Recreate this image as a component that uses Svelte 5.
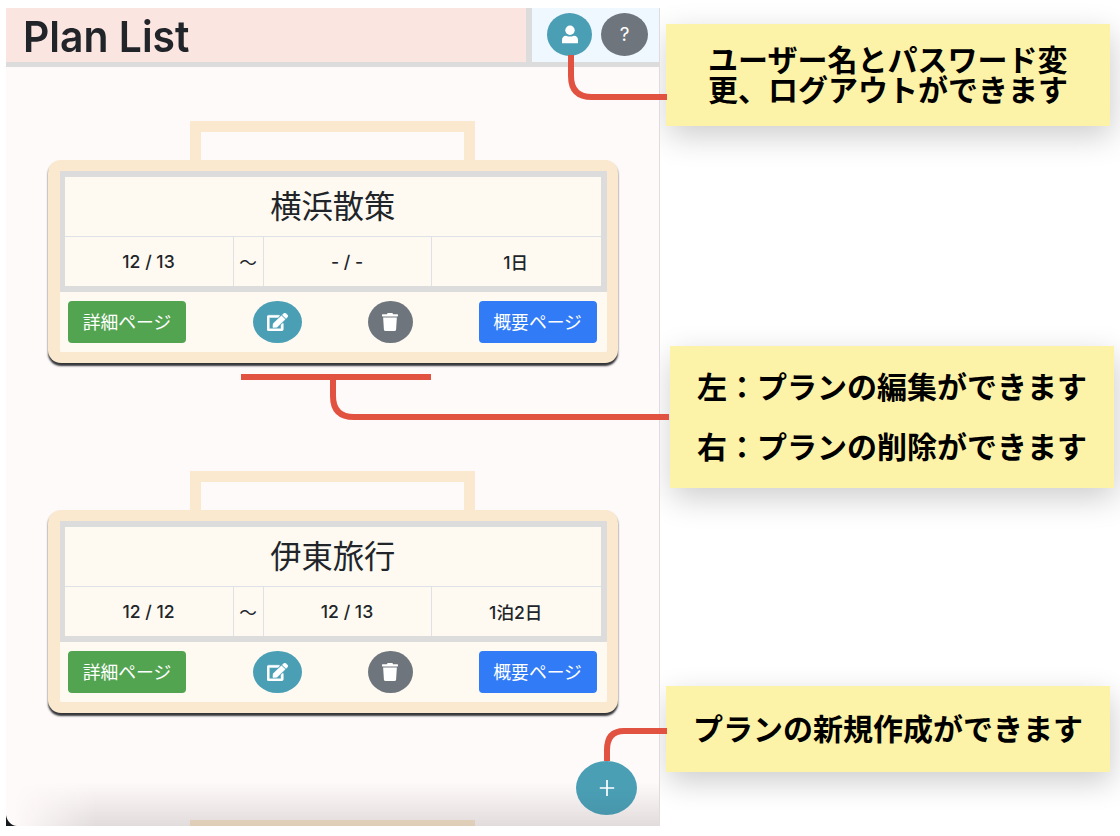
<script>
  const plans = [
    { title: '横浜散策', from: '12 / 13', to: '- / -', days: '1日' },
    { title: '伊東旅行', from: '12 / 12', to: '12 / 13', days: '1泊2日' }
  ];
</script>

<div class="page">
  <main class="screen">
    <header>
      <h1><span>Plan List</span></h1>
      <nav>
        <button class="oval user" aria-label="User">
          <svg width="18" height="19" viewBox="0 0 18 19" fill="#fff">
            <circle cx="9" cy="5.2" r="4.7" />
            <path d="M1 17.9V15.2Q1 10.7 5.2 10.7Q9 12.4 12.8 10.7Q17 10.7 17 15.2V17.9Q17 18.2 16.4 18.2H1.6Q1 18.2 1 17.9Z" />
          </svg>
        </button>
        <button class="oval help">?</button>
      </nav>
    </header>

    {#each plans as plan}
      <section class="plan">
        <div class="handle"></div>
        <div class="card">
          <div class="table">
            <h2>{plan.title}</h2>
            <div class="row">
              <span>{plan.from}</span>
              <span>～</span>
              <span>{plan.to}</span>
              <span>{plan.days}</span>
            </div>
          </div>
          <div class="actions">
            <button class="btn detail">詳細ページ</button>
            <button class="oval edit" aria-label="Edit">
              <svg width="21" height="18" viewBox="0 0 576 512" preserveAspectRatio="none" fill="#fff" stroke="#fff" stroke-width="12">
                <path d="M402.6 83.200l90.200 90.200c3.800 3.800 3.800 10 0 13.800L274.400 405.600l-92.800 10.300c-12.400 1.400-22.900-9.100-21.500-21.500l10.300-92.800L388.800 83.200c3.800-3.800 10-3.800 13.800 0zm162-22.900l-48.800-48.800c-15.200-15.200-39.900-15.200-55.200 0l-35.400 35.400c-3.800 3.800-3.800 10 0 13.800l90.200 90.200c3.800 3.800 10 3.800 13.800 0l35.400-35.400c15.200-15.300 15.200-40 0-55.200zM384 346.200V448H64V128h229.800c3.200 0 6.200-1.300 8.500-3.500l40-40c7.600-7.600 2.200-20.500-8.500-20.500H48C21.500 64 0 85.500 0 112v352c0 26.500 21.500 48 48 48h352c26.500 0 48-21.500 48-48V306.200c0-10.700-12.900-16-20.500-8.500l-40 40c-2.200 2.300-3.500 5.300-3.500 8.500z" />
              </svg>
            </button>
            <button class="oval trash" aria-label="Delete">
              <svg width="16" height="18" viewBox="0 0 448 512" preserveAspectRatio="none" fill="#fff">
                <path d="M432 32H312l-9.400-18.700A24 24 0 0 0 281.100 0H166.800a23.720 23.720 0 0 0-21.400 13.300L136 32H16A16 16 0 0 0 0 48v32a16 16 0 0 0 16 16h416a16 16 0 0 0 16-16V48a16 16 0 0 0-16-16zM53.200 467a48 48 0 0 0 47.900 45h245.800a48 48 0 0 0 47.900-45L416 128H32z" />
              </svg>
            </button>
            <button class="btn summary">概要ページ</button>
          </div>
        </div>
      </section>
    {/each}
    <div class="handle next"></div>
    <div class="fade"></div>
    <button class="oval add" aria-label="Add">
      <svg width="16" height="18" viewBox="0 0 16 18" stroke="#fff" stroke-width="1.7">
        <path d="M8 1V17M.8 9H15.200" />
      </svg>
    </button>
    <svg class="corner" width="12" height="12"><path d="M0 1C1 7 5 11.500 11 12H0Z" fill="#16191b" /></svg>
  </main>

  <aside>
    <div class="note account">ユーザー名とパスワード変<br />更、ログアウトができます</div>
    <div class="note manage">左：プランの編集ができます<br />右：プランの削除ができます</div>
    <div class="note create">プランの新規作成ができます</div>
  </aside>

  <svg class="lines" width="1120" height="836" fill="none" stroke="#e25241" stroke-width="6">
    <path d="M571 55V76Q571 97 592 97H667" />
    <path d="M241 377H431M333 377V396Q333 417 354 417H669" />
    <path d="M607 761V750Q607 731 624 731H667" />
  </svg>
</div>

<style>
  :global(body) {
    margin: 0;
    background: #fff;
  }
  .page {
    position: relative;
    box-sizing: border-box;
    display: flex;
    width: 1120px;
    height: 836px;
    padding-top: 8px;
    padding-left: 6px;
    overflow: hidden;
    font-family: Inter, 'Noto Sans CJK JP', sans-serif;
    color: #212529;
  }
  .screen {
    position: relative;
    box-sizing: border-box;
    width: 654px;
    height: 818px;
    overflow: hidden;
    background: #fffafa;
    border-right: 1px solid #dedcdd;
  }
  header {
    display: flex;
    box-sizing: border-box;
    height: 59px;
    border-bottom: 5.500px solid #dcdcdc;
  }
  h1 {
    box-sizing: border-box;
    width: 526px;
    margin: 0;
    padding-left: 17px;
    background: #fbe5e1;
    border-right: 6px solid #dcdcdc;
    font-size: 43px;
    font-weight: 600;
    line-height: 56px;
  }
  h1 span {
    display: inline-block;
    transform: scaleX(0.95);
    transform-origin: left;
  }
  nav {
    display: flex;
    flex: 1;
    gap: 9px;
    padding: 5px 0 0 15px;
    background: #f0f8ff;
  }
  button {
    display: flex;
    align-items: center;
    justify-content: center;
    padding: 0;
    border: 0;
    color: #fff;
    font-family: inherit;
  }
  .oval {
    width: 45px;
    height: 43px;
    border-radius: 50%;
    background: #4a9fb5;
  }
  .oval.help {
    width: 47px;
    background: #6e757c;
    font-size: 19px;
  }
  .plan {
    height: 350px;
    box-sizing: border-box;
    padding-top: 54px;
  }
  .handle {
    box-sizing: border-box;
    width: 285px;
    height: 39px;
    margin-left: 184px;
    border: 11px solid #fbe9cf;
    border-bottom: 0;
  }
  .handle.next {
    margin-top: 53px;
  }
  .card {
    box-sizing: border-box;
    width: 570px;
    height: 203px;
    margin-left: 42px;
    padding: 11px 11.500px 11px 12px;
    border-radius: 13px;
    background: linear-gradient(#fefaf2, #fefaf2) content-box, #fbe9cf;
    box-shadow: 0 2.500px 2px #333539;
  }
  .table {
    box-sizing: border-box;
    height: 121px;
    border: 6px solid #dcdcdc;
    border-left-width: 5px;
  }
  h2 {
    box-sizing: border-box;
    height: 60px;
    margin: 0;
    border-bottom: 1px solid #dee2e6;
    text-align: center;
    font-size: 31.300px;
    font-weight: 400;
    line-height: 60px;
  }
  .row {
    display: grid;
    grid-template-columns: 169px 30px 168px 1fr;
    height: 49px;
  }
  .row span {
    display: flex;
    align-items: center;
    justify-content: center;
    padding-right: 1px;
    padding-bottom: 1px;
    border-right: 1px solid #dee2e6;
    font-size: 17.600px;
    font-weight: 450;
    white-space: pre;
  }
  .row span:nth-child(2) {
    font-weight: 400;
  }
  .row span:last-child {
    border-right: 0;
  }
  .actions {
    display: flex;
    align-items: center;
    padding: 8.500px 10px 0 8px;
  }
  .btn {
    box-sizing: border-box;
    width: 118px;
    height: 42.500px;
    padding-bottom: 2px;
    border-radius: 4px;
    font-size: 17.800px;
  }
  .actions .oval {
    height: 42.500px;
  }
  .detail {
    background: #53a451;
  }
  .summary {
    margin-left: 66px;
    background: #327bf6;
  }
  .edit {
    width: 49px;
    margin-left: 67px;
  }
  .trash {
    margin-left: 66px;
    background: #6e757c;
  }
  .add {
    position: absolute;
    left: 570px;
    top: 753px;
    width: 61px;
    height: 54px;
    background: linear-gradient(#4a9fb5 50%, #4896ab);
  }
  .fade {
    position: absolute;
    left: 0;
    right: 0;
    bottom: 0;
    height: 44px;
    background: linear-gradient(transparent, rgba(30, 20, 20, 0.13));
    -webkit-mask-image: linear-gradient(to right, transparent 8px, #000 90px);
    mask-image: linear-gradient(to right, transparent 8px, #000 90px);
  }
  .corner {
    position: absolute;
    left: 0;
    bottom: 0;
  }
  aside {
    display: flex;
    flex-direction: column;
    padding-top: 16px;
    padding-left: 6px;
  }
  .note {
    box-sizing: border-box;
    display: flex;
    align-items: center;
    justify-content: center;
    width: 444px;
    flex-shrink: 0;
    padding-bottom: 4px;
    background: #fdf3a8;
    box-shadow: 2px 10px 30px rgba(0, 0, 0, 0.2);
    color: #000;
    font-family: 'Noto Sans CJK JP', sans-serif;
    font-size: 30px;
    font-weight: 700;
    line-height: 30px;
    white-space: nowrap;
  }
  .account {
    height: 102px;
  }
  .manage {
    height: 142px;
    margin: 220px 0 198px 4px;
    line-height: 60px;
  }
  .create {
    height: 86px;
  }
  .lines {
    position: absolute;
    left: 0;
    top: 0;
    pointer-events: none;
  }
</style>
